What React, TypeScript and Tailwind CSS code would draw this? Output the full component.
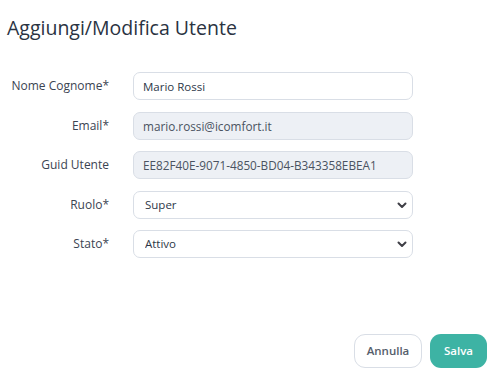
const fields = [
    { label: "Nome Cognome*", value: "Mario Rossi", kind: "input" },
    { label: "Email*", value: "mario.rossi@icomfort.it", kind: "readonly" },
    { label: "Guid Utente", value: "EE82F40E-9071-4850-BD04-B343358EBEA1", kind: "readonly" },
    { label: "Ruolo*", value: "Super", kind: "select" },
    { label: "Stato*", value: "Attivo", kind: "select" },
]

const Chevron = () => (
    <svg width="10" height="7" viewBox="0 0 10 7" className="pointer-events-none absolute right-[6px] top-[11px]">
        <path d="M1.5 1.5 L5 5 L8.5 1.5" fill="none" stroke="#3f3f46" strokeWidth="2" strokeLinecap="round" strokeLinejoin="round" />
    </svg>
)

const App = () => {
    return (
        <div className="relative h-[381px] w-[500px] bg-white text-[#2d3748]" style={{ fontFamily: "'Open Sans', 'Liberation Sans', sans-serif" }}>
            <h1 className="pl-[7px] pt-[15px] text-[19.5px] font-medium leading-[26px] text-[#2a3342]">
                Aggiungi/Modifica Utente
            </h1>
            <form className="mt-[31px] flex flex-col gap-[11.5px]">
                {fields.map((f) => (
                    <div key={f.label} className="flex items-center">
                        <label className="w-[109px] shrink-0 text-right text-[12px] text-[#3b4452]">{f.label}</label>
                        <div className="relative ml-[24px] w-[280px]">
                            {f.kind === "select" ? (
                                <>
                                    <select
                                        defaultValue={f.value}
                                        className="h-[28px] w-full appearance-none rounded-[7px] border border-[#d9dee6] bg-white pl-[11px] text-[11.5px] text-[#2d3748] outline-none"
                                    >
                                        <option>{f.value}</option>
                                    </select>
                                    <Chevron />
                                </>
                            ) : (
                                <input
                                    type="text"
                                    readOnly
                                    defaultValue={f.value}
                                    className={
                                        f.kind === "readonly"
                                            ? "h-[28px] w-full rounded-[7px] border border-[#d9dee6] bg-[#edf0f5] pl-[9px] text-[11.75px] text-[#4a5361] outline-none"
                                            : "h-[28px] w-full rounded-[7px] border border-[#d9dee6] bg-white pl-[9px] text-[11.5px] text-[#2d3748] outline-none"
                                    }
                                />
                            )}
                        </div>
                    </div>
                ))}
            </form>
            <div className="absolute bottom-[13px] right-[13px] flex gap-[8px]">
                <button className="h-[34px] w-[68px] rounded-[11px] border border-[#d9dee6] bg-white text-[11.5px] font-semibold text-[#555d6b]">
                    Annulla
                </button>
                <button className="h-[34px] w-[57px] rounded-[11px] bg-[#3db3a4] text-[11.5px] font-semibold text-white">
                    Salva
                </button>
            </div>
        </div>
    )
}

export default App
